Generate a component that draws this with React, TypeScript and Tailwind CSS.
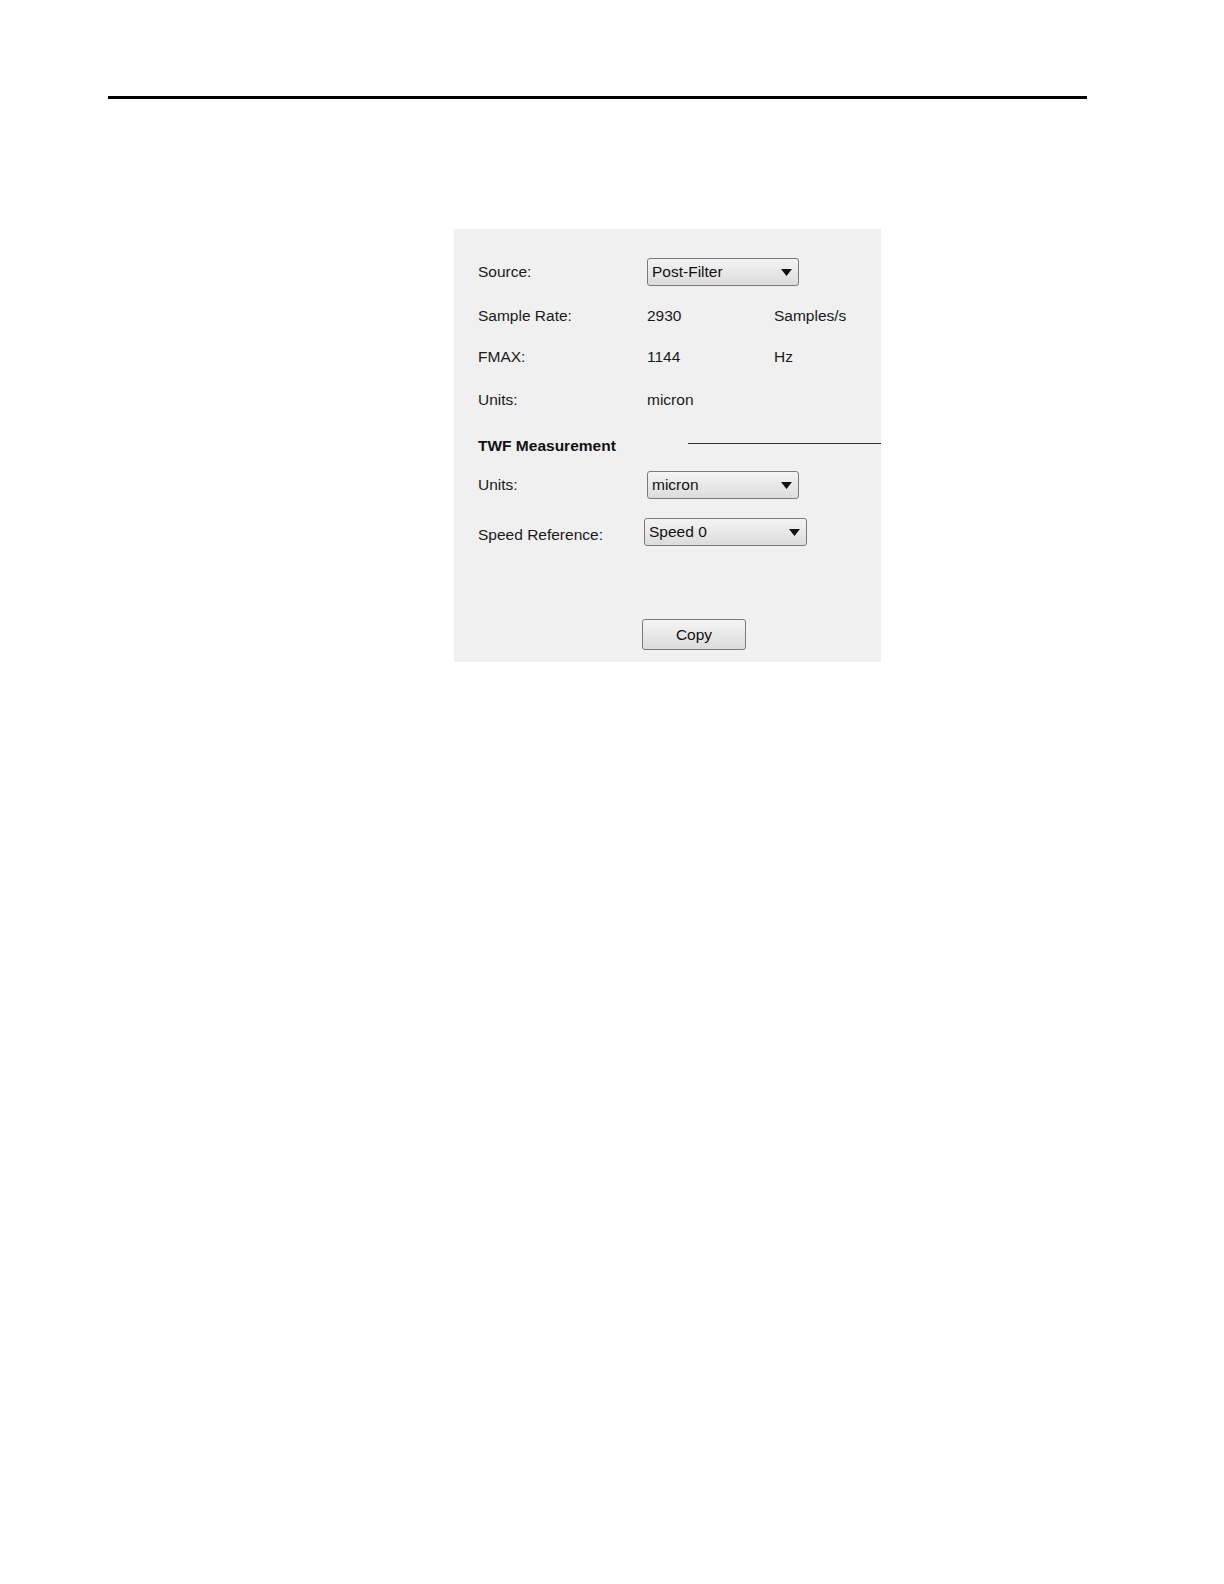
import React from 'react';

function Dropdown({ value, width }: { value: string; width: string }) {
  return (
    <div
      className={`${width} h-[28px] flex items-center justify-between pl-[4px] pr-[6px] border border-[#7a7a7a] rounded-[3px] bg-gradient-to-b from-[#f4f4f4] to-[#dcdcdc] text-[15.5px] text-[#111]`}
    >
      <span>{value}</span>
      <svg width="11" height="7" viewBox="0 0 11 7">
        <path d="M0 0 L11 0 L5.5 7 Z" fill="#111" />
      </svg>
    </div>
  );
}

export default function App() {
  return (
    <div className="w-[1224px] h-[1584px] overflow-hidden bg-white font-['Liberation_Sans',Arial,sans-serif] text-[#1a1a1a]">
      {/* page header rule */}
      <div className="pt-[96px] pl-[108px]">
        <div className="w-[979px] h-[3px] bg-black" />
      </div>

      <div className="mt-[130px] ml-[454px] w-[427px] h-[433px] bg-[#f0f0f0] flex flex-col text-[15.5px]">
        {/* Source */}
        <div className="mt-[29px] h-[28px] flex items-center pl-[24px]">
          <span className="w-[169px]">Source:</span>
          <Dropdown value="Post-Filter" width="w-[152px]" />
        </div>

        <div className="mt-[16px] h-[28px] flex items-center pl-[24px]">
          <span className="w-[169px]">Sample Rate:</span>
          <span className="w-[127px]">2930</span>
          <span>Samples/s</span>
        </div>

        <div className="mt-[13px] h-[28px] flex items-center pl-[24px]">
          <span className="w-[169px]">FMAX:</span>
          <span className="w-[127px]">1144</span>
          <span>Hz</span>
        </div>

        <div className="mt-[15px] h-[28px] flex items-center pl-[24px]">
          <span className="w-[169px]">Units:</span>
          <span>micron</span>
        </div>

        {/* TWF section */}
        <div className="mt-[18px] h-[28px] flex items-center pl-[24px]">
          <span className="w-[210px] font-bold text-[#111]">TWF Measurement</span>
          <div className="flex-1 h-px bg-[#333] -mt-[6px]" />
        </div>

        <div className="mt-[11px] h-[28px] flex items-center pl-[24px]">
          <span className="w-[169px]">Units:</span>
          <Dropdown value="micron" width="w-[152px]" />
        </div>

        <div className="mt-[22px] h-[28px] flex items-center pl-[24px]">
          <span className="w-[166px]">Speed Reference:</span>
          <div className="-mt-[6px]">
            <Dropdown value="Speed 0" width="w-[163px]" />
          </div>
        </div>

        <div className="mt-[70px] pl-[188px]">
          <button className="w-[104px] h-[31px] border border-[#7a7a7a] rounded-[3px] bg-gradient-to-b from-[#f4f4f4] to-[#dcdcdc] text-[15.5px] text-[#111]">
            Copy
          </button>
        </div>
      </div>
    </div>
  );
}
